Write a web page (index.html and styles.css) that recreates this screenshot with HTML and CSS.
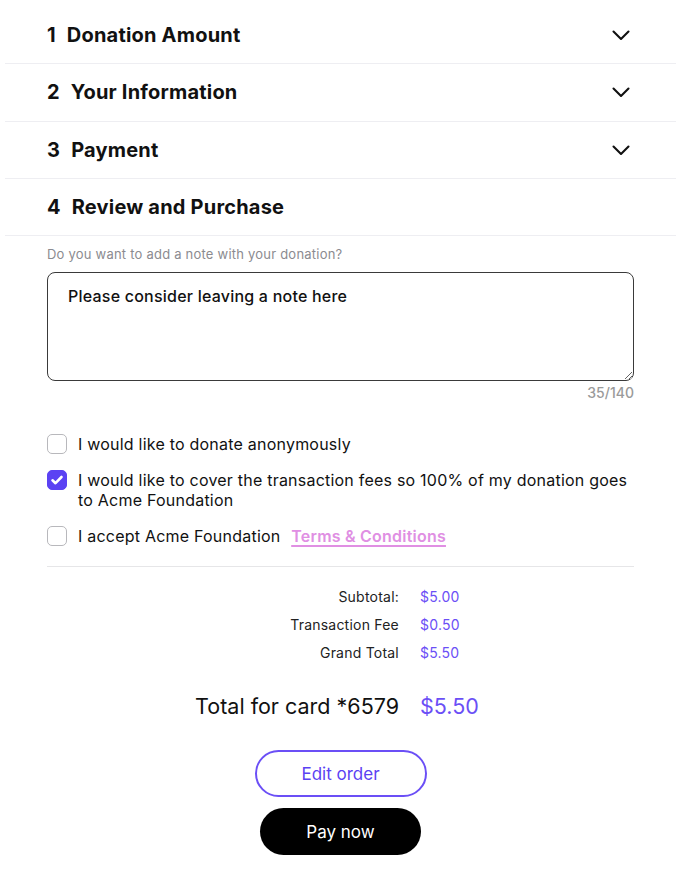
FILE: index.html
```html
<!DOCTYPE html>
<html lang="en">
<head>
<meta charset="utf-8">
<title>Donation checkout</title>
<link rel="stylesheet" href="styles.css">
</head>
<body>
<div class="page">
  <div class="step">
    <h2 class="step-title"><span class="num">1</span>Donation Amount</h2>
    <svg class="chev" viewBox="0 0 24 24" width="24" height="24"><path d="M4.5 8.5l7.5 7.5 7.5-7.5" fill="none" stroke="#111" stroke-width="2.1" stroke-linecap="round" stroke-linejoin="round"/></svg>
  </div>
  <div class="step">
    <h2 class="step-title"><span class="num">2</span>Your Information</h2>
    <svg class="chev" viewBox="0 0 24 24" width="24" height="24"><path d="M4.5 8.5l7.5 7.5 7.5-7.5" fill="none" stroke="#111" stroke-width="2.1" stroke-linecap="round" stroke-linejoin="round"/></svg>
  </div>
  <div class="step">
    <h2 class="step-title"><span class="num">3</span>Payment</h2>
    <svg class="chev" viewBox="0 0 24 24" width="24" height="24"><path d="M4.5 8.5l7.5 7.5 7.5-7.5" fill="none" stroke="#111" stroke-width="2.1" stroke-linecap="round" stroke-linejoin="round"/></svg>
  </div>
  <div class="step">
    <h2 class="step-title"><span class="num">4</span>Review and Purchase</h2>
  </div>

  <div class="review">
    <label class="note-label" for="note">Do you want to add a note with your donation?</label>
    <textarea id="note" class="note">Please consider leaving a note here</textarea>
    <div class="counter">35/140</div>

    <div class="checks">
      <label class="check">
        <span class="box"></span>
        <span class="check-text">I would like to donate anonymously</span>
      </label>
      <label class="check">
        <span class="box checked"><svg viewBox="0 0 20 20" width="20" height="20"><path d="M5.5 10.3l3 2.9 6-6.2" fill="none" stroke="#fff" stroke-width="2.6" stroke-linecap="round" stroke-linejoin="round"/></svg></span>
        <span class="check-text">I would like to cover the transaction fees so 100% of my donation goes to Acme Foundation</span>
      </label>
      <label class="check">
        <span class="box"></span>
        <span class="check-text">I accept Acme Foundation <a class="terms" href="#">Terms &amp; Conditions</a></span>
      </label>
    </div>

    <div class="summary">
      <div class="sum-label">Subtotal:</div><div class="sum-val">$5.00</div>
      <div class="sum-label">Transaction Fee</div><div class="sum-val">$0.50</div>
      <div class="sum-label">Grand Total</div><div class="sum-val">$5.50</div>
    </div>

    <div class="total">
      <div class="total-label">Total for card *6579</div><div class="total-val">$5.50</div>
    </div>

    <div class="actions">
      <button class="btn btn-outline">Edit order</button>
      <button class="btn btn-dark">Pay now</button>
    </div>
  </div>
</div>
</body>
</html>
```

FILE: styles.css
```css
* { box-sizing: border-box; }
html, body { margin: 0; padding: 0; background: #fff; }
body {
  font-family: Inter, "Noto Sans", "Liberation Sans", sans-serif;
  color: #111;
  letter-spacing: 0.22px;
}
.page {
  width: 671px;
  margin: 7px 0 0 5px;
}
.step {
  height: 57.3px;
  display: flex;
  align-items: center;
  justify-content: space-between;
  padding: 0 42px;
  border-bottom: 1.5px solid #eeeef2;
}
.step-title {
  margin: 0;
  font-size: 20px;
  font-weight: 700;
  letter-spacing: 0.2px;
}
.num { margin-right: 11px; }
.chev { display: block; margin-right: 1px; }

.review {
  padding: 9px 42px 0;
}
.note-label {
  display: block;
  font-size: 13px;
  color: #8b8b90;
  line-height: 18px;
  margin-bottom: 9px;
}
.note {
  display: block;
  width: 100%;
  height: 109px;
  border: 1.5px solid #3a3a3a;
  border-radius: 8px;
  padding: 13px 20px;
  font-family: inherit;
  font-size: 16px;
  font-weight: 500;
  letter-spacing: 0.22px;
  color: #111;
  resize: vertical;
  outline: none;
}
.counter {
  text-align: right;
  font-size: 14px;
  font-weight: 500;
  color: #9a9a9a;
  margin-top: 3px;
  line-height: 18px;
  letter-spacing: 0;
}
.checks {
  display: flex;
  flex-direction: column;
  gap: 16px;
  margin-top: 32px;
}
.check {
  display: flex;
  align-items: flex-start;
  gap: 11px;
  font-size: 16px;
  line-height: 20px;
  color: #111;
}
.box {
  flex: none;
  width: 20px;
  height: 20px;
  border: 1.5px solid #b8b8bc;
  border-radius: 5px;
  background: #fff;
}
.box.checked {
  background: #5b42f3;
  border-color: #5b42f3;
  position: relative;
}
.box.checked svg {
  position: absolute;
  left: -1.5px;
  top: -1.5px;
}
.terms {
  margin-left: 6px;
  color: #e08fe3;
  font-weight: 600;
  text-decoration: underline;
  text-decoration-thickness: 2px;
  text-underline-offset: 3px;
}
.summary {
  display: grid;
  grid-template-columns: 352px auto;
  column-gap: 21px;
  row-gap: 8px;
  margin-top: 20px;
  padding-top: 20px;
  border-top: 1.5px solid #e6e6e8;
  font-size: 14px;
  line-height: 20px;
}
.sum-label { text-align: right; color: #222; }
.sum-val { color: #6b4ff6; }
.total {
  display: grid;
  grid-template-columns: 352px auto;
  column-gap: 21px;
  margin-top: 28px;
  font-size: 21.5px;
  line-height: 30px;
  letter-spacing: 0;
}
.total-label { text-align: right; color: #111; }
.total-val { color: #6b4ff6; }
.actions {
  display: flex;
  flex-direction: column;
  align-items: center;
  gap: 11px;
  margin-top: 29px;
}
.btn {
  font-family: inherit;
  font-size: 17px;
  letter-spacing: 0;
  height: 47px;
  border-radius: 24px;
  cursor: pointer;
}
.btn-outline {
  width: 172px;
  background: #fff;
  color: #5b42f3;
  border: 2px solid #6b4ff6;
}
.btn-dark {
  width: 161px;
  background: #000;
  color: #fff;
  border: none;
}
```
